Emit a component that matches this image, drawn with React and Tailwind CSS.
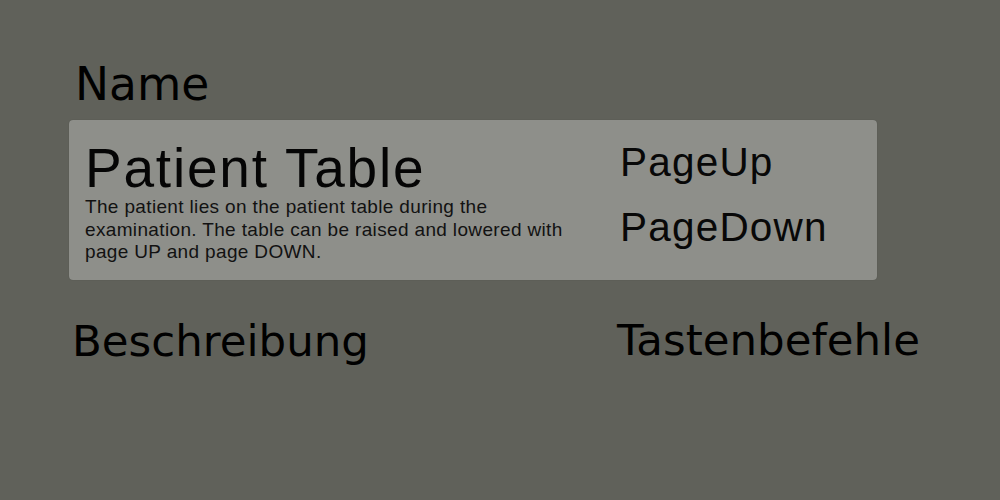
export default function App() {
  return (
    <div className="w-[1000px] h-[500px] bg-[#60615a] overflow-hidden text-black">
      <div className="pt-[62px] pl-[75px] text-[45.5px] leading-[46px] h-[120px]" style={{ fontFamily: '"DejaVu Sans", sans-serif' }}>
        Name
      </div>
      <div
        className="ml-[69px] w-[808px] h-[160px] rounded-[4px] bg-[#8e8f8a] flex shadow-[0_0_1px_rgba(0,0,0,0.3)]"
        style={{ fontFamily: '"Liberation Sans", Arial, sans-serif' }}
      >
        <div className="w-[551px] shrink-0 pl-[16px] pt-[21px]">
          <div className="text-[55px] leading-[55px] tracking-[1.8px] text-[#050505]">Patient Table</div>
          <div className="w-[505px] text-[19px] leading-[22.5px] tracking-[0.35px] text-[#121212]">
            The patient lies on the patient table during the examination. The table can be raised and lowered with page UP and page DOWN.
          </div>
        </div>
        <div className="pt-[22px] flex flex-col gap-[24.5px] text-[40.5px] leading-[40.5px] tracking-[1.2px] text-[#080808]">
          <div>PageUp</div>
          <div>PageDown</div>
        </div>
      </div>
      <div className="flex items-start pt-[39px] text-[43.5px] leading-[43.5px]" style={{ fontFamily: '"DejaVu Sans", sans-serif' }}>
        <div className="w-[617px] shrink-0 pl-[72px] pt-[1px]">Beschreibung</div>
        <div>Tastenbefehle</div>
      </div>
    </div>
  );
}
